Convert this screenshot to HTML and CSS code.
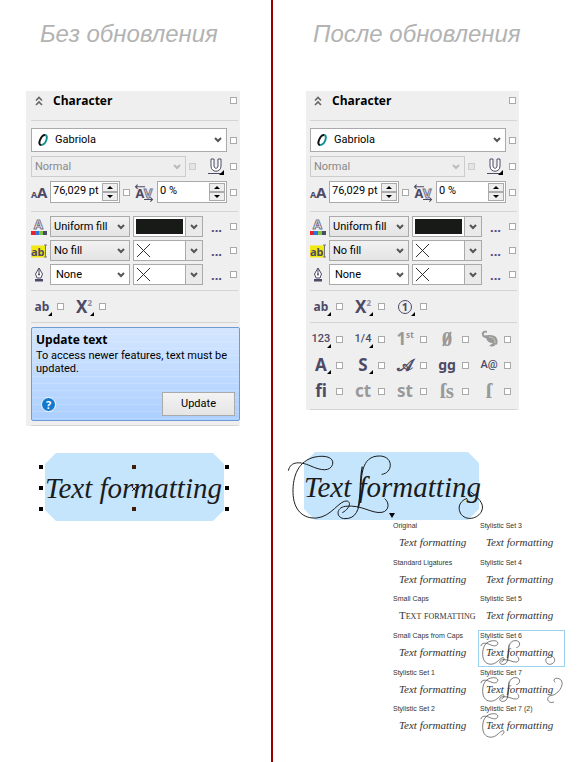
FILE: index.html
```html
<!DOCTYPE html>
<html lang="ru">
<head>
<meta charset="utf-8">
<title>Text formatting</title>
<link rel="stylesheet" href="styles.css">
</head>
<body>
<svg class="defs" aria-hidden="true">
  <symbol id="chev" viewBox="0 0 8 6"><path d="M1 1l3 3 3-3" fill="none" stroke="currentColor" stroke-width="2"/></symbol>
  <symbol id="collapse" viewBox="0 0 8 10"><path d="M1 4.500L4 1.500l3 3M1 9l3-3 3 3" fill="none" stroke="#666" stroke-width="1.600"/></symbol>
  <symbol id="opentype" viewBox="0 0 14 14"><g fill="none"><path d="M9 2c4 0 1 10-4 10" stroke="#159090" stroke-width="2"/><path d="M9 2C5 2 1 12 5 12" stroke="#111" stroke-width="2"/></g></symbol>
  <symbol id="underline" viewBox="0 0 16 17"><path d="M3 1h3v7c0 3 4 3 4 0V1h3v7c0 7-10 7-10 0z" fill="#fff" stroke="#4d4a66"/><path d="M0 15.500h14" stroke="#4d4a66"/><path d="M16 12v5h-5z" fill="#000"/></symbol>
  <symbol id="size" viewBox="0 0 16 16"><text x="0" y="13" class="g g9">A</text><text x="6" y="13" class="g g15">A</text></symbol>
  <symbol id="kern" viewBox="0 0 18 16"><text x="1" y="13" class="g g12">A</text><text x="9" y="13" class="g g12 hollow">V</text><path d="M1 2.500h9M3 .500l-2 2 2 2M9 14.500h8M15 12.500l2 2-2 2" fill="none" stroke="#4d4a66"/></symbol>
  <symbol id="fill" viewBox="0 0 16 17"><text x="3" y="11" class="g g13 hollow">A</text><path d="M0 13h4v4H0z" fill="#e8222c"/><path d="M4 13h4v4H4z" fill="#2878e0"/><path d="M8 13h4v4H8z" fill="#80c342"/><path d="M12 13h4v4h-4z" fill="#4d4a66"/></symbol>
  <symbol id="back" viewBox="0 0 16 16"><path d="M0 3h14v12H0z" fill="#f2e913"/><text x="0" y="13" class="g g11">ab</text><path d="M13 2.500h1.500v12H13m3-12h-1.500m0 12H16" fill="none" stroke="#777"/></symbol>
  <symbol id="pen" viewBox="0 0 16 16"><path d="M8 1.500l-3.500 6 1.500 4h4l1.500-4zM8 2v6" fill="#fff" stroke="#4d4a66"/><circle cx="8" cy="8" r="1" fill="#4d4a66"/><path d="M4 12.500h8V15H4z" fill="#4d4a66"/></symbol>
  <symbol id="nofill" viewBox="0 0 16 16"><path d="M1 1l14 14M15 1L1 15" stroke="#222" stroke-width="1"/></symbol>
  <symbol id="orn" viewBox="0 0 18 18"><path d="M7 1C4 0 1 2 2 5c1 3 3 3 4 3 1 3 3 5 7 5l-4 3c4 1 6 0 7-2l1 1c2-6-1-10-7-10-3 0-5 1-6 0C3 3 5 2 7 3z" fill="#999"/><path d="M9 7c4 0 6 2 6 6" fill="none" stroke="#d2d2b8"/></symbol>
  <symbol id="swash-t" viewBox="18 66 600 204"><path d="M25 122C32 92 62 95 90 107c35 16 60 18 68-4 5-22-25-28-53-22C55 92 38 138 39 187c1 56 33 80 71 77 45-4 68-55 92-51 14 5 3 26-15 35" fill="none" stroke="currentColor"/></symbol>
  <symbol id="swash-f" viewBox="18 66 600 204"><path d="M305 133c32-3 38-51-3-55-63-3-57 68-61 118-3 44-13 70-46 70-28-1-28-33 1-37 50-6 78 23 110 18 22-4 23-30 8-41" fill="none" stroke="currentColor"/><path d="M247 110c-9 40-3 86-13 124" fill="none" stroke="currentColor" stroke-width="4"/></symbol>
  <symbol id="swash-g" viewBox="18 66 600 204"><path d="M572 186c18 14 44 34 33 57-10 23-48 33-64 6-10-20 2-38 20-44" fill="none" stroke="currentColor"/></symbol>
  <symbol id="swash-h" viewBox="18 66 600 204"><path d="M572 220c72 0 136-120 60-136-28-4-40 18-20 30M572 220c-42 22-8 70 30 50" fill="none" stroke="currentColor"/></symbol>
</svg>

<main class="compare">
  <section class="side before">
    <h1>Без обновления</h1>
    <div class="panel">
      <header><svg class="collapse"><use href="#collapse"/></svg><h2>Character</h2><button class="sq" aria-label="Style"></button></header>
      <div class="group font">
        <div class="row"><label class="pick family"><svg class="ot"><use href="#opentype"/></svg><select aria-label="Font"><option>Gabriola</option></select><svg class="chev"><use href="#chev"/></svg></label><button class="sq" aria-label="Style"></button></div>
        <div class="row"><label class="pick weight off"><select aria-label="Font style" disabled><option>Normal</option></select><svg class="chev"><use href="#chev"/></svg></label><button class="sq off" aria-label="Style" disabled></button><button class="icon under" aria-label="Underline"><svg><use href="#underline"/></svg></button><button class="sq last" aria-label="Style"></button></div>
        <div class="row"><svg class="ic"><use href="#size"/></svg><span class="spin"><input aria-label="Size" value="76,029 pt"><span class="steps"><button aria-label="Up"></button><button class="down" aria-label="Down"></button></span></span><button class="sq" aria-label="Style"></button><svg class="ic wide"><use href="#kern"/></svg><span class="spin"><input aria-label="Kerning" value="0 %"><span class="steps"><button aria-label="Up"></button><button class="down" aria-label="Down"></button></span></span><button class="sq" aria-label="Style"></button></div>
      </div>
      <div class="group fills">
        <div class="row"><svg class="ic"><use href="#fill"/></svg><label class="pick grey"><select aria-label="Fill type"><option>Uniform fill</option></select><svg class="chev"><use href="#chev"/></svg></label><button class="colour" aria-label="Fill colour"><span class="swatch black"></span><span class="drop"><svg class="chev"><use href="#chev"/></svg></span></button><button class="more" aria-label="Fill settings">...</button><button class="sq" aria-label="Style"></button></div>
        <div class="row"><svg class="ic"><use href="#back"/></svg><label class="pick grey"><select aria-label="Background fill"><option>No fill</option></select><svg class="chev"><use href="#chev"/></svg></label><button class="colour" aria-label="Background colour"><span class="swatch"><svg><use href="#nofill"/></svg></span><span class="drop"><svg class="chev"><use href="#chev"/></svg></span></button><button class="more" aria-label="Background settings">...</button><button class="sq" aria-label="Style"></button></div>
        <div class="row"><svg class="ic"><use href="#pen"/></svg><label class="pick"><select class="deep" aria-label="Outline width"><option>None</option></select><svg class="chev"><use href="#chev"/></svg></label><button class="colour" aria-label="Outline colour"><span class="swatch"><svg><use href="#nofill"/></svg></span><span class="drop"><svg class="chev"><use href="#chev"/></svg></span></button><button class="more" aria-label="Outline settings">...</button><button class="sq" aria-label="Style"></button></div>
      </div>
      <div class="group glyphs single">
        <div class="cell"><button class="glyph menu">ab</button><button class="sq" aria-label="Style"></button></div>
        <div class="cell"><button class="glyph menu big">X<sup>2</sup></button><button class="sq" aria-label="Style"></button></div>
      </div>
      <div class="group notewrap">
        <aside class="note">
          <h3>Update text</h3>
          <p>To access newer features, text must be updated.</p>
          <div class="actions"><button class="help" aria-label="Help">?</button><button class="update">Update</button></div>
        </aside>
      </div>
    </div>
    <div class="art">
      <div class="sample">Text formatting</div>
      <svg class="handles" viewBox="0 0 190 68" aria-hidden="true"><path d="M0 12h4v4H0zM0 33h4v4H0zM0 54h4v4H0zM186 12h4v4h-4zM186 33h4v4h-4zM186 54h4v4h-4z"/><path d="M93 12h4v4h-4zM93 54h4v4h-4z" fill="#411a08"/><path d="M93 34l4 4m0-4l-4 4" stroke="#411a08"/></svg>
    </div>
  </section>

  <section class="side after">
    <h1>После обновления</h1>
    <div class="panel">
      <header><svg class="collapse"><use href="#collapse"/></svg><h2>Character</h2><button class="sq" aria-label="Style"></button></header>
      <div class="group font">
        <div class="row"><label class="pick family"><svg class="ot"><use href="#opentype"/></svg><select aria-label="Font"><option>Gabriola</option></select><svg class="chev"><use href="#chev"/></svg></label><button class="sq" aria-label="Style"></button></div>
        <div class="row"><label class="pick weight off"><select aria-label="Font style" disabled><option>Normal</option></select><svg class="chev"><use href="#chev"/></svg></label><button class="sq off" aria-label="Style" disabled></button><button class="icon under" aria-label="Underline"><svg><use href="#underline"/></svg></button><button class="sq last" aria-label="Style"></button></div>
        <div class="row"><svg class="ic"><use href="#size"/></svg><span class="spin"><input aria-label="Size" value="76,029 pt"><span class="steps"><button aria-label="Up"></button><button class="down" aria-label="Down"></button></span></span><button class="sq" aria-label="Style"></button><svg class="ic wide"><use href="#kern"/></svg><span class="spin"><input aria-label="Kerning" value="0 %"><span class="steps"><button aria-label="Up"></button><button class="down" aria-label="Down"></button></span></span><button class="sq" aria-label="Style"></button></div>
      </div>
      <div class="group fills">
        <div class="row"><svg class="ic"><use href="#fill"/></svg><label class="pick grey"><select aria-label="Fill type"><option>Uniform fill</option></select><svg class="chev"><use href="#chev"/></svg></label><button class="colour" aria-label="Fill colour"><span class="swatch black"></span><span class="drop"><svg class="chev"><use href="#chev"/></svg></span></button><button class="more" aria-label="Fill settings">...</button><button class="sq" aria-label="Style"></button></div>
        <div class="row"><svg class="ic"><use href="#back"/></svg><label class="pick grey"><select aria-label="Background fill"><option>No fill</option></select><svg class="chev"><use href="#chev"/></svg></label><button class="colour" aria-label="Background colour"><span class="swatch"><svg><use href="#nofill"/></svg></span><span class="drop"><svg class="chev"><use href="#chev"/></svg></span></button><button class="more" aria-label="Background settings">...</button><button class="sq" aria-label="Style"></button></div>
        <div class="row"><svg class="ic"><use href="#pen"/></svg><label class="pick"><select class="deep" aria-label="Outline width"><option>None</option></select><svg class="chev"><use href="#chev"/></svg></label><button class="colour" aria-label="Outline colour"><span class="swatch"><svg><use href="#nofill"/></svg></span><span class="drop"><svg class="chev"><use href="#chev"/></svg></span></button><button class="more" aria-label="Outline settings">...</button><button class="sq" aria-label="Style"></button></div>
      </div>
      <div class="group glyphs single">
        <div class="cell"><button class="glyph menu">ab</button><button class="sq" aria-label="Style"></button></div>
        <div class="cell"><button class="glyph menu big">X<sup>2</sup></button><button class="sq" aria-label="Style"></button></div>
        <div class="cell"><button class="glyph menu"><span class="ring">1</span></button><button class="sq" aria-label="Style"></button></div>
      </div>
      <div class="group glyphs table">
        <div class="cell"><button class="glyph menu small">123</button><button class="sq" aria-label="Style"></button></div>
        <div class="cell"><button class="glyph menu small">1/4</button><button class="sq" aria-label="Style"></button></div>
        <div class="cell"><button class="glyph big dim">1<sup>st</sup></button><button class="sq" aria-label="Style"></button></div>
        <div class="cell"><button class="glyph dim serif slashed">0</button><button class="sq" aria-label="Style"></button></div>
        <div class="cell"><button class="glyph" aria-label="Ornaments"><svg class="orn"><use href="#orn"/></svg></button><button class="sq" aria-label="Style"></button></div>
        <div class="cell"><button class="glyph menu big">A</button><button class="sq" aria-label="Style"></button></div>
        <div class="cell"><button class="glyph menu big">S</button><button class="sq" aria-label="Style"></button></div>
        <div class="cell"><button class="glyph big script">𝒜</button><button class="sq" aria-label="Style"></button></div>
        <div class="cell"><button class="glyph mid">gg</button><button class="sq" aria-label="Style"></button></div>
        <div class="cell"><button class="glyph tiny">A@</button><button class="sq" aria-label="Style"></button></div>
        <div class="cell"><button class="glyph big">fi</button><button class="sq" aria-label="Style"></button></div>
        <div class="cell"><button class="glyph big dim">ct</button><button class="sq" aria-label="Style"></button></div>
        <div class="cell"><button class="glyph big dim">st</button><button class="sq" aria-label="Style"></button></div>
        <div class="cell"><button class="glyph dim serif">ſs</button><button class="sq" aria-label="Style"></button></div>
        <div class="cell"><button class="glyph dim serif">ſ</button><button class="sq" aria-label="Style"></button></div>
      </div>
    </div>
    <div class="art">
      <div class="sample">Text formatting</div>
      <svg class="swash"><use href="#swash-t"/><use href="#swash-f"/><use href="#swash-g"/></svg>
      <span class="pointer"></span>
    </div>
    <div class="sets">
      <figure><figcaption>Original</figcaption><p>Text formatting</p></figure>
      <figure><figcaption>Standard Ligatures</figcaption><p>Text formatting</p></figure>
      <figure><figcaption>Small Caps</figcaption><p class="caps">Text formatting</p></figure>
      <figure><figcaption>Small Caps from Caps</figcaption><p>Text formatting</p></figure>
      <figure><figcaption>Stylistic Set 1</figcaption><p>Text formatting</p></figure>
      <figure><figcaption>Stylistic Set 2</figcaption><p>Text formatting</p></figure>
      <figure><figcaption>Stylistic Set 3</figcaption><p>Text formatting</p></figure>
      <figure><figcaption>Stylistic Set 4</figcaption><p>Text formatting</p></figure>
      <figure><figcaption>Stylistic Set 5</figcaption><p>Text formatting</p></figure>
      <figure class="chosen"><figcaption>Stylistic Set 6</figcaption><p>Text formatting</p><svg><use href="#swash-t"/><use href="#swash-f"/><use href="#swash-g"/></svg></figure>
      <figure><figcaption>Stylistic Set 7</figcaption><p>Text formatting</p><svg><use href="#swash-t"/><use href="#swash-f"/><use href="#swash-h"/></svg></figure>
      <figure><figcaption>Stylistic Set 7 (2)</figcaption><p>Text formatting</p><svg><use href="#swash-t"/></svg></figure>
    </div>
  </section>
</main>
</body>
</html>
```
FILE: styles.css
```css
* { box-sizing: border-box; }
body { margin: 0; background: #fff; color: #000; font: 11px/14px Roboto, "Liberation Sans", sans-serif; }
.defs { display: none; }
h1, h2, h3, p, figure { margin: 0; }
button { padding: 0; border: 0; background: none; color: inherit; font: inherit; }
svg { display: block; overflow: visible; }
symbol { overflow: visible; }

.compare { display: grid; grid-template-columns: minmax(0, 271fr) minmax(0, 307fr); min-height: 100vh; }
.after { border-left: 2px solid #980000; }
h1 { height: 91px; padding: 20px 0 0 40px; color: #b3b3b3; font: italic 24px/28px "Liberation Sans", Arial, sans-serif; white-space: nowrap; }

.panel { background: #efefef; padding: 0 2px 0 5px; }
.before .panel { margin: 0 31px 0 26px; }
.after .panel { margin: 0 59px 0 33px; padding-left: 4px; }
.panel header { display: flex; align-items: center; height: 30px; padding-bottom: 10px; border-bottom: 1px solid #d4d4d4; }
.collapse { width: 8px; height: 10px; margin-left: 4px; }
h2 { flex: 1; margin-left: 10px; font: bold 12px/14px "Open Sans", sans-serif; }
.sq { flex: none; width: 7px; height: 7px; margin-right: 1px; background: #fff; border: 1px solid #aaa; }
.sq.off { background: #e4e4e4; border-color: #ccc; }
.sq.last { margin-left: auto; }

.group { display: flex; flex-direction: column; border-bottom: 1px solid #d4d4d4; }
.row { display: flex; align-items: center; gap: 3px; }
.font { gap: 4px; padding: 7px 0 8px; }
.fills { gap: 3px; padding: 4px 0 5px; }

.pick { position: relative; display: flex; align-items: center; flex: 80; height: 21px; background: #fff; border: 1px solid #aaa; }
.pick select { appearance: none; flex: 1; min-width: 0; height: 100%; padding: 0 0 0 3px; border: 0; background: none; color: #000; font: inherit; }
.pick select.deep { padding-left: 5px; }
.chev { width: 8px; height: 6px; color: #555; }
.pick .chev { position: absolute; right: 4px; pointer-events: none; }
.family { height: 24px; }
.ot { width: 14px; height: 14px; margin: 0 2px 0 4px; }
.pick.grey { background: linear-gradient(#f2f2f2, #e4e4e4); }
.pick.off { flex: 0 0 155px; background: #eee; border-color: #ccc; }
.pick.off select { color: #888; opacity: 1; }
.pick.off .chev { color: #bbb; }
.under { margin-left: 8px; }
.under svg { width: 16px; height: 17px; }
.ic { flex: none; width: 16px; height: 17px; }
.ic.wide { width: 20px; }
.g { fill: #4d4a66; font-family: "Noto Sans", sans-serif; font-weight: bold; }
.g9 { font-size: 9px; }
.g11 { font-size: 11px; }
.g12 { font-size: 12px; }
.g13 { font-size: 13px; }
.g15 { font-size: 15px; }
.hollow { fill: #fff; stroke: #77748c; stroke-width: 1px; }

.spin { display: flex; flex: 1; min-width: 0; height: 22px; background: #fff; border: 1px solid #aaa; }
.spin input { flex: 1; width: 0; min-width: 0; padding: 0 0 2px 2px; border: 0; background: none; font: inherit; }
.steps { display: grid; width: 17px; padding: 1px 1px 1px 0; }
.steps button { display: grid; place-items: center; background: #eee; border: 1px solid #aaa; }
.steps button::before { content: ""; border: 3px solid transparent; border-top: 0; border-bottom-color: #000; }
.steps .down::before { transform: rotate(180deg); }

.colour { display: flex; flex: 70; height: 21px; background: #fff; border: 1px solid #aaa; }
.swatch { flex: 1; display: flex; align-self: stretch; margin: 2px; }
.swatch.black { background: #181a18; }
.swatch svg { width: 15px; height: 15px; }
.drop { display: grid; place-items: center; align-self: stretch; width: 17px; background: #eaeaea; border-left: 1px solid #aaa; }
.more { flex: none; width: 21px; color: #4d4a80; font: bold 13px/14px "Noto Sans", sans-serif; }

.glyphs { display: grid; grid-template-columns: repeat(5, 42px); }
.single { grid-auto-rows: 31px; }
.table { grid-auto-rows: 26px; padding: 3px 0 5px; }
.cell { display: flex; align-items: center; gap: 4px; }
.glyph { position: relative; display: flex; align-items: center; justify-content: center; width: 22px; height: 20px; color: #4d4a66; font: bold 12px/20px "Noto Sans", sans-serif; }
.glyph.menu::after { content: ""; position: absolute; right: 1px; bottom: 1px; border: 2px solid #000; border-top-color: transparent; border-left-color: transparent; }
.glyph.big { font-size: 17px; }
.glyph.mid { font-size: 14px; }
.glyph.small { font: 500 11px/20px Roboto, sans-serif; }
.glyph.tiny { font: 500 11px/20px Roboto, sans-serif; }
.glyph.dim { color: #999; }
.glyph.serif { font-family: "Liberation Serif", serif; font-size: 21px; }
.slashed::before { content: ""; position: absolute; width: 2px; height: 16px; background: #999; transform: rotate(30deg); }
.glyph.script { font-family: "DejaVu Serif", serif; }
.glyph sup { align-self: flex-start; font-size: 8px; line-height: 12px; color: #8f8da0; }
.ring { width: 14px; height: 14px; border: 1px solid #4d4a66; border-radius: 50%; font-size: 11px; line-height: 12px; text-align: center; }
.orn { width: 18px; height: 18px; }

.notewrap { padding: 4px 0; }
.note { margin-right: -2px; padding: 5px 4px 4px; min-height: 94px; display: flex; flex-direction: column; border: 1px solid #6f9bd0; border-radius: 2px; background: repeating-linear-gradient(#fff0 0 6px, #ffffff26 6px 7px), linear-gradient(#d4e6ff, #accfff); }
.note h3 { font: bold 12px/14px "Open Sans", sans-serif; }
.note p { margin-top: 2px; line-height: 13px; }
.actions { display: flex; justify-content: space-between; align-items: center; margin-top: auto; }
.help { width: 15px; height: 15px; margin-left: 5px; border: 1px solid #fff; border-radius: 50%; background: #1478cc; color: #fff; font: bold 11px/13px "Noto Sans", sans-serif; }
.update { width: 73px; height: 24px; border: 1px solid #aaa; background: linear-gradient(#f3f3f3, #e5e5e5); }

.art { position: relative; }
.before .art { margin: 27px 47px 0 45px; }
.after .art { margin: 42px 99px 0 31px; }
.sample { position: relative; height: 68px; color: #1b1b1b; font: italic 29px/70px "Liberation Serif", serif; white-space: nowrap; }
.sample::before { content: ""; position: absolute; inset: 0; z-index: -1; background: #c5e5fd; clip-path: polygon(11px 0, calc(100% - 11px) 0, 100% 11px, 100% calc(100% - 11px), calc(100% - 11px) 100%, 11px 100%, 0 calc(100% - 11px), 0 11px); }
.handles { position: absolute; left: -6px; top: 0; width: 190px; height: 68px; }
.swash { position: absolute; left: -18px; top: 0; width: 200px; height: 68px; color: #1b1b1b; stroke-width: 3px; }
.pointer { position: absolute; left: 85px; top: 61px; border: 3px solid transparent; border-top: 5px solid #000; border-bottom: 0; }

.sets { display: grid; grid-auto-flow: column; grid-template: repeat(6, 1fr) / repeat(2, 87px); min-height: 220px; margin-left: 118px; color: #333; }
.sets figure { position: relative; padding-left: 1px; border: 1px solid transparent; white-space: nowrap; }
.sets .chosen { border-color: #9bd3ee; }
.sets figcaption { font: 7px/10px "Liberation Sans", Arial, sans-serif; }
.sets p { margin: 4px 0 0 6px; font: italic 11px/14px "Liberation Serif", serif; }
.sets .caps { font-style: normal; font-variant: small-caps; }
.sets svg { position: absolute; left: 1px; top: 8px; width: 76px; height: 26px; stroke-width: 5px; }
```
